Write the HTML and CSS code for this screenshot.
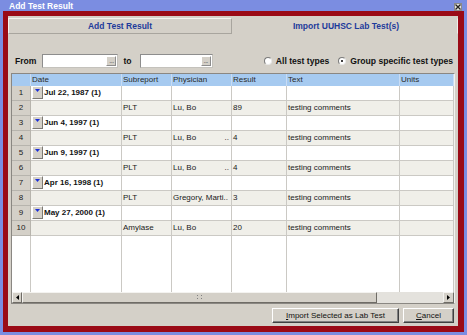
FILE: index.html
```html
<!DOCTYPE html>
<html>
<head>
    <title>Add Test Result</title>
<link rel="stylesheet" href="styles.css">
</head>
<body>
    <div class="window">
        <div class="titlebar">
            <span class="title">Add Test Result</span>
            <span class="close">
                <svg width="6" height="6" viewBox="0 0 6 6"><path d="M0.5 0.5 L5.5 5.5 M5.5 0.5 L0.5 5.5" stroke="#222" stroke-width="1.3"/></svg>
            </span>
        </div>
        <div class="frame">
            <div class="panel">
                <div class="tabs">
                    <div class="tab">Add Test Result</div>
                    <div class="tab selected">Import UUHSC Lab Test(s)</div>
                </div>

                <div class="filters">
                    <span class="lbl">From</span>
                    <span class="date-field"><span class="pick">...</span></span>
                    <span class="lbl to">to</span>
                    <span class="date-field short"><span class="pick">...</span></span>
                    <label class="radio first"><span class="dot"></span>All test types</label>
                    <label class="radio"><span class="dot on"></span>Group specific test types</label>
                </div>

                <div class="grid-box">
                    <div class="grid-view">
                        <table class="grid">
                            <colgroup>
                                <col style="width:19px">
                                <col style="width:91px">
                                <col style="width:50px">
                                <col style="width:60px">
                                <col style="width:55px">
                                <col style="width:113px">
                                <col style="width:54px">
                            </colgroup>
                            <thead>
                                <tr><th></th><th>Date</th><th>Subreport</th><th>Physician</th><th>Result</th><th>Text</th><th>Units</th></tr>
                            </thead>
                            <tbody>
                                <tr class="group"><td class="num">1</td><td><span class="drop"><svg width="5" height="3"><polygon points="0,0 5,0 2.5,3" fill="#1b2fd8"/></svg></span><b>Jul 22, 1987 (1)</b></td><td></td><td></td><td></td><td></td><td></td></tr>
                                <tr class="item"><td class="num">2</td><td></td><td>PLT</td><td>Lu, Bo</td><td>89</td><td>testing comments</td><td></td></tr>
                                <tr class="group"><td class="num">3</td><td><span class="drop"><svg width="5" height="3"><polygon points="0,0 5,0 2.5,3" fill="#1b2fd8"/></svg></span><b>Jun 4, 1997 (1)</b></td><td></td><td></td><td></td><td></td><td></td></tr>
                                <tr class="item"><td class="num">4</td><td></td><td>PLT</td><td>Lu, Bo<span class="more">..</span></td><td>4</td><td>testing comments</td><td></td></tr>
                                <tr class="group"><td class="num">5</td><td><span class="drop"><svg width="5" height="3"><polygon points="0,0 5,0 2.5,3" fill="#1b2fd8"/></svg></span><b>Jun 9, 1997 (1)</b></td><td></td><td></td><td></td><td></td><td></td></tr>
                                <tr class="item"><td class="num">6</td><td></td><td>PLT</td><td>Lu, Bo<span class="more">..</span></td><td>4</td><td>testing comments</td><td></td></tr>
                                <tr class="group"><td class="num">7</td><td><span class="drop"><svg width="5" height="3"><polygon points="0,0 5,0 2.5,3" fill="#1b2fd8"/></svg></span><b>Apr 16, 1998 (1)</b></td><td></td><td></td><td></td><td></td><td></td></tr>
                                <tr class="item"><td class="num">8</td><td></td><td>PLT</td><td>Gregory, Marti..</td><td>3</td><td>testing comments</td><td></td></tr>
                                <tr class="group"><td class="num">9</td><td><span class="drop"><svg width="5" height="3"><polygon points="0,0 5,0 2.5,3" fill="#1b2fd8"/></svg></span><b>May 27, 2000 (1)</b></td><td></td><td></td><td></td><td></td><td></td></tr>
                                <tr class="item"><td class="num">10</td><td></td><td>Amylase</td><td>Lu, Bo</td><td>20</td><td>testing comments</td><td></td></tr>
                                <tr class="filler"><td></td><td></td><td></td><td></td><td></td><td></td><td></td></tr>
                            </tbody>
                        </table>
                    </div>
                    <div class="hscroll">
                        <span class="sb-btn"><svg width="3" height="5"><polygon points="3,0 3,5 0,2.5" fill="#000"/></svg></span>
                        <span class="sb-thumb"><svg width="6" height="5"><rect x="0" y="0" width="1" height="1" fill="#808080"/><rect x="4" y="0" width="1" height="1" fill="#808080"/><rect x="0" y="3" width="1" height="1" fill="#808080"/><rect x="4" y="3" width="1" height="1" fill="#808080"/></svg></span>
                        <span class="sb-track"></span>
                        <span class="sb-btn right"><svg width="3" height="5"><polygon points="0,0 0,5 3,2.5" fill="#000"/></svg></span>
                    </div>
                </div>

                <div class="actions">
                    <button class="btn wide"><u>I</u>mport Selected as Lab Test</button>
                    <button class="btn"><u>C</u>ancel</button>
                </div>
            </div>
        </div>
    </div>
</body>
</html>
```

FILE: styles.css
```css
body {
    margin: 0;
    width: 467px;
    height: 335px;
    overflow: hidden;
    background-color: #7b8de1;
    font-family: "Liberation Sans", Arial, sans-serif;
    font-size: 8px;
    color: #1a1a1a;
}

.window {
    display: flex;
    flex-direction: column;
    height: 335px;
}

/* title bar */
.titlebar {
    height: 11px;
    display: flex;
    align-items: center;
    justify-content: space-between;
    padding: 0 5px 0 9px;
}

.title {
    color: #fff;
    font-weight: bold;
    font-size: 8.5px;
}

.close {
    width: 8px;
    height: 8px;
    margin-top: 2px;
    display: flex;
    align-items: center;
    justify-content: center;
    background-color: #e4e2de;
    border: 1px solid #8a8a8a;
    box-sizing: border-box;
}

/* red frame + gray dialog body */
.frame {
    flex: 1;
    display: flex;
    margin: 0 3px 3px 3px;
    padding: 5px 6px 6px 5px;
    background-color: #9a0a16;
}

.panel {
    flex: 1;
    display: flex;
    flex-direction: column;
    padding: 2px 0 3px 0;
    background-color: #d4d0c8;
}

.tabs {
    display: grid;
    grid-template-columns: 1fr 1fr;
    gap: 2px;
    height: 16px;
}

.tab {
    display: flex;
    align-items: center;
    justify-content: center;
    color: #1d3b9b;
    font-weight: bold;
    font-size: 8.5px;
    border: 1px solid;
    border-color: #f4f3f0 #a8a59e #a8a59e #f4f3f0;
}

.tab.selected {
    border-color: transparent #efeeea transparent transparent;
}

/* date range + radios */
.filters {
    display: flex;
    align-items: center;
    height: 14px;
    margin-top: 20px;
    padding: 0 5px 0 7px;
    font-weight: bold;
    font-size: 8.6px;
    color: #111;
}

.lbl {
    margin-right: 6px;
}

.lbl.to {
    margin: 0 8px 0 5px;
}

.date-field {
    width: 76px;
    height: 14px;
    box-sizing: border-box;
    display: flex;
    justify-content: flex-end;
    padding: 1px;
    background-color: #fff;
    border: 1px solid;
    border-color: #8d8d8d #c4c2bc #c4c2bc #8d8d8d;
}

.date-field.short {
    width: 73px;
}

.pick {
    width: 10px;
    display: flex;
    justify-content: center;
    align-items: center;
    overflow: hidden;
    line-height: 10px;
    font-weight: normal;
    font-size: 7px;
    letter-spacing: -0.5px;
    color: #555;
    background-color: #d4d0c8;
    border: 1px solid;
    border-color: #fff #8d8d8d #8d8d8d #fff;
    box-sizing: border-box;
}

.radio {
    display: flex;
    align-items: center;
    gap: 4px;
    margin-left: 9px;
}

.radio.first {
    margin-left: auto;
}

.dot {
    width: 8px;
    height: 8px;
    box-sizing: border-box;
    border-radius: 50%;
    border: 1px solid;
    border-color: #7a7a7a #e8e8e8 #e8e8e8 #7a7a7a;
    background-color: #fff;
    display: flex;
    align-items: center;
    justify-content: center;
}

.dot.on::after {
    content: "";
    width: 2px;
    height: 2px;
    border-radius: 50%;
    background-color: #000;
}

/* result grid */
.grid-box {
    margin: 5px 3px 0 3px;
    border: 1px solid;
    border-color: #8a8782 #f4f3f0 #8a8782 #8a8782;
}

.grid-view {
    height: 218px;
    overflow: hidden;
    background-color: #fff;
}

.grid {
    width: 442px;
    table-layout: fixed;
    border-collapse: separate;
    border-spacing: 0;
}

.grid th,
.grid td {
    padding: 0 0 0 1px;
    text-align: left;
    white-space: nowrap;
    overflow: hidden;
    border-right: 1px solid #cbc9c4;
}

.grid th {
    height: 12px;
    line-height: 12px;
    font-weight: normal;
    color: #2a2a2a;
    background-color: #a6caf0;
    border-right-color: #c8dcf4;
    box-sizing: border-box;
}

.grid td {
    height: 15px;
    line-height: 14px;
    border-bottom: 1px solid #cbc9c4;
    box-sizing: border-box;
}

.grid tr.item td {
    background-color: #f0efe9;
}

.grid td.num {
    text-align: center;
    padding: 0;
    background-color: #d4d0c8;
    border-color: #b7b4ad;
}

.grid tr.item td.num {
    background-color: #d4d0c8;
}

.grid b {
    font-size: 8px;
    color: #111;
    vertical-align: top;
}

.drop {
    display: inline-flex;
    justify-content: center;
    align-items: flex-start;
    box-sizing: border-box;
    width: 11px;
    height: 13px;
    margin: 0 1px 0 0;
    padding-top: 2px;
    vertical-align: top;
    background-color: #d4d0c8;
    border: 1px solid;
    border-color: #fff #7d7a74 #7d7a74 #fff;
}

.more {
    float: right;
    margin-right: 2px;
}

.grid tr.filler td {
    height: 56px;
    border-bottom: none;
    background-color: #fff;
}

/* horizontal scroll bar */
.hscroll {
    display: flex;
    height: 11px;
    background-color: #e4e2dd;
}

.sb-btn,
.sb-thumb {
    display: flex;
    align-items: center;
    justify-content: center;
    box-sizing: border-box;
    background-color: #d4d0c8;
    border: 1px solid;
    border-color: #f4f3f0 #6f6c66 #6f6c66 #f4f3f0;
}

.sb-btn {
    width: 10px;
}

.sb-btn.right {
    width: 11px;
}

.sb-thumb {
    width: 355px;
}

.sb-track {
    flex: 1;
}

/* bottom buttons */
.actions {
    display: flex;
    justify-content: flex-end;
    gap: 4px;
    margin: 4px 4px 0 4px;
}

.btn {
    width: 51px;
    height: 15px;
    padding: 0;
    font-family: "Liberation Sans", Arial, sans-serif;
    font-size: 8px;
    color: #111;
    background-color: #d4d0c8;
    border: 1px solid;
    border-color: #fff #404040 #404040 #fff;
    box-shadow: inset -1px -1px #808080;
}

.btn.wide {
    width: 127px;
}
```
